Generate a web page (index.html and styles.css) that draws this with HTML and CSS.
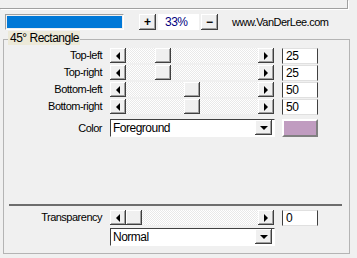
FILE: index.html
```html
<!DOCTYPE html>
<html>
<head>
  <meta charset="utf-8">
  <title>45° Rectangle</title>
  <link rel="stylesheet" href="styles.css">
</head>
<body>
  <div class="top-panel"></div>

  <div class="toolbar">
    <div class="progress"><div class="progress-fill"></div></div>
    <button class="btn zoom-btn zoom-plus">+</button>
    <div class="zoom-value">33%</div>
    <button class="btn zoom-btn">&minus;</button>
    <div class="site">www.VanDerLee.com</div>
  </div>

  <div class="group">
    <div class="legend">45° Rectangle</div>

    <div class="row">
      <div class="label">Top-left</div>
      <div class="scrollbar">
        <div class="btn arrow-btn"><span class="arrow-left"></span></div>
        <div class="track"><div class="btn thumb" style="margin-left: 29px"></div></div>
        <div class="btn arrow-btn"><span class="arrow-right"></span></div>
      </div>
      <div class="edit">25</div>
    </div>

    <div class="row">
      <div class="label">Top-right</div>
      <div class="scrollbar">
        <div class="btn arrow-btn"><span class="arrow-left"></span></div>
        <div class="track"><div class="btn thumb" style="margin-left: 29px"></div></div>
        <div class="btn arrow-btn"><span class="arrow-right"></span></div>
      </div>
      <div class="edit">25</div>
    </div>

    <div class="row">
      <div class="label">Bottom-left</div>
      <div class="scrollbar">
        <div class="btn arrow-btn"><span class="arrow-left"></span></div>
        <div class="track"><div class="btn thumb" style="margin-left: 58px"></div></div>
        <div class="btn arrow-btn"><span class="arrow-right"></span></div>
      </div>
      <div class="edit">50</div>
    </div>

    <div class="row">
      <div class="label">Bottom-right</div>
      <div class="scrollbar">
        <div class="btn arrow-btn"><span class="arrow-left"></span></div>
        <div class="track"><div class="btn thumb" style="margin-left: 58px"></div></div>
        <div class="btn arrow-btn"><span class="arrow-right"></span></div>
      </div>
      <div class="edit">50</div>
    </div>

    <div class="row color-row">
      <div class="label">Color</div>
      <div class="combo">
        <div class="combo-text">Foreground</div>
        <div class="btn combo-btn"><span class="arrow-down"></span></div>
      </div>
      <div class="swatch"></div>
    </div>

    <div class="divider"></div>

    <div class="row transparency-row">
      <div class="label">Transparency</div>
      <div class="scrollbar">
        <div class="btn arrow-btn"><span class="arrow-left"></span></div>
        <div class="track"><div class="btn thumb" style="margin-left: 0px"></div></div>
        <div class="btn arrow-btn"><span class="arrow-right"></span></div>
      </div>
      <div class="edit">0</div>
    </div>

    <div class="row mode-row">
      <div class="label"></div>
      <div class="combo">
        <div class="combo-text">Normal</div>
        <div class="btn combo-btn"><span class="arrow-down"></span></div>
      </div>
    </div>
  </div>
</body>
</html>
```

FILE: styles.css
```css
/* classic dialog look */
body {
  margin: 0;
  padding: 0;
  background-color: #f0f0f0;
  font-family: "Liberation Sans", Arial, sans-serif;
  font-size: 11px;
  letter-spacing: -0.5px;
  color: #000;
}

.top-panel {
  width: 347px;
  height: 8px;
  border-right: 1px solid #a0a0a0;
  border-bottom: 1px solid #a0a0a0;
  box-shadow: 1px 1px 0 #fff;
}

.btn {
  box-sizing: border-box;
  background-color: #f0f0f0;
  border: none;
  padding: 0;
  box-shadow: inset -1px -1px 0 #404040, inset 1px 1px 0 #fff, inset -2px -2px 0 #a0a0a0;
}

/* toolbar */
.toolbar {
  display: flex;
  align-items: center;
  height: 16px;
  margin-top: 5px;
  padding-left: 5px;
}

.progress {
  box-sizing: border-box;
  width: 119px;
  height: 16px;
  padding: 1px;
  border: 1px solid;
  border-color: #a0a0a0 #fff #fff #a0a0a0;
}

.progress-fill {
  height: 100%;
  background-color: #0078d7;
}

.zoom-btn {
  width: 17px;
  height: 16px;
  font-family: "Liberation Sans", Arial, sans-serif;
  font-size: 12px;
  font-weight: bold;
  line-height: 14px;
  color: #000;
}

.zoom-plus {
  margin-left: 15px;
}

.zoom-value {
  width: 41px;
  height: 16px;
  margin: 0 2px;
  padding-left: 7px;
  box-sizing: border-box;
  background-color: #fff;
  color: #000080;
  font-size: 12px;
  line-height: 16px;
}

.site {
  margin-left: 14px;
  font-size: 11px;
}

/* group box */
.group {
  position: relative;
  box-sizing: border-box;
  width: 347px;
  height: 215px;
  margin: 9px 0 0 3px;
  padding-top: 8px;
  border: 1px solid #b4b4b4;
}

.legend {
  position: absolute;
  top: -9px;
  left: 4px;
  height: 14px;
  padding: 0 1px 0 2px;
  background-color: #ece9d8;
  font-size: 12px;
  line-height: 14px;
}

.row {
  display: flex;
  align-items: flex-start;
  height: 16px;
  margin-bottom: 1px;
}

.label {
  width: 98px;
  margin-right: 8px;
  text-align: right;
  line-height: 15px;
}

.scrollbar {
  display: flex;
  width: 164px;
  height: 15px;
}

.arrow-btn {
  width: 16px;
  height: 15px;
  display: flex;
  align-items: center;
  justify-content: center;
}

.arrow-left {
  width: 0;
  height: 0;
  border-top: 4px solid transparent;
  border-bottom: 4px solid transparent;
  border-right: 4px solid #000;
}

.arrow-right {
  width: 0;
  height: 0;
  border-top: 4px solid transparent;
  border-bottom: 4px solid transparent;
  border-left: 4px solid #000;
}

.arrow-down {
  width: 0;
  height: 0;
  border-left: 4px solid transparent;
  border-right: 4px solid transparent;
  border-top: 4px solid #000;
}

.track {
  flex: 1;
  height: 15px;
  background-color: #f4f4f4;
  background-image: repeating-conic-gradient(#ffffff 0 25%, #e9e9e9 0 50%);
  background-size: 2px 2px;
}

.thumb {
  width: 16px;
  height: 15px;
}

.edit {
  box-sizing: border-box;
  width: 36px;
  height: 16px;
  margin-left: 8px;
  padding-left: 3px;
  background-color: #fff;
  border-left: 1px solid #404040;
  border-right: 1px solid #404040;
  border-top: 1px solid #e0e0e0;
  border-bottom: 1px solid #e0e0e0;
  font-size: 12px;
  line-height: 14px;
}

/* color and mode */
.color-row {
  height: 18px;
  margin-top: 4px;
}

.color-row .label {
  line-height: 18px;
}

.combo {
  box-sizing: border-box;
  display: flex;
  width: 165px;
  height: 18px;
  padding: 1px 2px 1px 1px;
  background-color: #fff;
  border: 1px solid;
  border-color: #404040 #fff #fff #404040;
}

.combo-text {
  flex: 1;
  padding-left: 1px;
  font-size: 12px;
  line-height: 14px;
}

.combo-btn {
  width: 17px;
  height: 15px;
  margin-top: -1px;
  display: flex;
  align-items: center;
  justify-content: center;
}

.swatch {
  box-sizing: border-box;
  width: 36px;
  height: 18px;
  margin-left: 7px;
  background-color: #c09cc0;
  border: 2px solid;
  border-color: #fff #808080 #808080 #fff;
}

.divider {
  width: 333px;
  height: 2px;
  margin: 67px 0 0 5px;
  background-color: #6d6d6d;
}

.transparency-row {
  margin-top: 4px;
}

.mode-row {
  height: 18px;
  margin-top: 2px;
}
```
